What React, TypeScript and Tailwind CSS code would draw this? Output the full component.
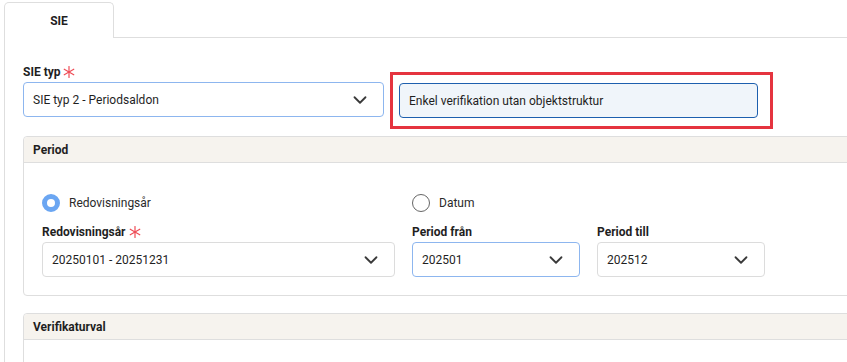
import { Asterisk, ChevronDown } from "lucide-react";

const Required = () => (
  <Asterisk size={22} strokeWidth={1.3} className="text-[#ee4b55] -ml-[2px] -my-[3px] shrink-0" />
);

const Label = ({ text, required }: { text: string; required?: boolean }) => (
  <div className="flex items-center h-4 mb-[2px] font-bold text-[12px] leading-4 text-[#1f1f1f]">
    {text}
    {required && <Required />}
  </div>
);

const Select = ({ value, focused }: { value: string; focused?: boolean }) => (
  <div
    className={`h-[35px] flex items-center justify-between pl-[9px] pr-3 rounded-[4px] bg-white border ${
      focused ? "border-[#8db6ef]" : "border-[#dcdcdc]"
    }`}
  >
    <span className="text-[12px] text-[#1f1f1f]">{value}</span>
    <ChevronDown size={22} strokeWidth={2} className="text-[#3a3a3a]" />
  </div>
);

const Radio = ({ label, checked }: { label: string; checked?: boolean }) => (
  <div className="flex items-center h-[18px] gap-[9px]">
    <span
      className={`w-[18px] h-[18px] rounded-full bg-white ${
        checked ? "border-[5px] border-[#6ba6f2]" : "border-[1.5px] border-[#666]"
      }`}
    />
    <span className="text-[12px] text-[#2a2a2a]">{label}</span>
  </div>
);

const Panel = ({ title, children }: { title: string; children?: React.ReactNode }) => (
  <div className="border border-[#dedede] rounded-[4px] bg-white">
    <div className="h-[26px] flex items-center pl-[9px] bg-[#f6f3ee] border-b border-[#dedede] rounded-t-[4px] font-bold text-[12px] text-[#1f1f1f]">
      {title}
    </div>
    {children}
  </div>
);

export default function App() {
  return (
    <div className="w-[847px] h-[362px] overflow-hidden bg-white font-['Roboto',sans-serif]">
      {/* Tabs */}
      <div className="flex pt-[2px] w-[900px]">
        <div className="ml-[4px] w-[110px] h-[36px] border border-b-0 border-[#dedede] rounded-t-[5px] flex items-center justify-center font-bold text-[12px] text-[#1f1f1f]">
          SIE
        </div>
        <div className="flex-1 border-b border-[#dedede]" />
      </div>

      <div className="ml-[4px] w-[900px] h-[400px] border-l border-[#dedede] pl-[18px] pt-[26px]">
        <div className="grid grid-cols-[361px_359px] gap-x-[15px]">
          <div>
            <Label text="SIE typ" required />
            <Select value="SIE typ 2 - Periodsaldon" focused />
          </div>
          <div className="pt-[19px]">
            <div className="relative">
              <div className="h-[35px] flex items-center pl-[9px] rounded-[4px] bg-[#f0f5fa] border border-[#1d5fae] text-[12px] text-[#1f1f1f]">
                Enkel verifikation utan objektstruktur
              </div>
              {/* annotation */}
              <div className="absolute -top-[11px] -left-[9px] -right-[15px] -bottom-[11px] border-[3px] border-[#e5343f] pointer-events-none" />
            </div>
          </div>
        </div>

        <div className="mt-[18px]">
          <Panel title="Period">
            <div className="pl-[18px] pt-[31px] pb-[18px]">
              <div className="grid grid-cols-[353px_168px_168px] gap-x-[17px]">
                <Radio label="Redovisningsår" checked />
                <Radio label="Datum" />
                <div />
              </div>
              <div className="grid grid-cols-[353px_168px_168px] gap-x-[17px] mt-[12px]">
                <div>
                  <Label text="Redovisningsår" required />
                  <Select value="20250101 - 20251231" />
                </div>
                <div>
                  <Label text="Period från" />
                  <Select value="202501" focused />
                </div>
                <div>
                  <Label text="Period till" />
                  <Select value="202512" />
                </div>
              </div>
            </div>
          </Panel>
        </div>

        <div className="mt-[17px]">
          <Panel title="Verifikaturval">
            <div className="h-[60px]" />
          </Panel>
        </div>
      </div>
    </div>
  );
}
